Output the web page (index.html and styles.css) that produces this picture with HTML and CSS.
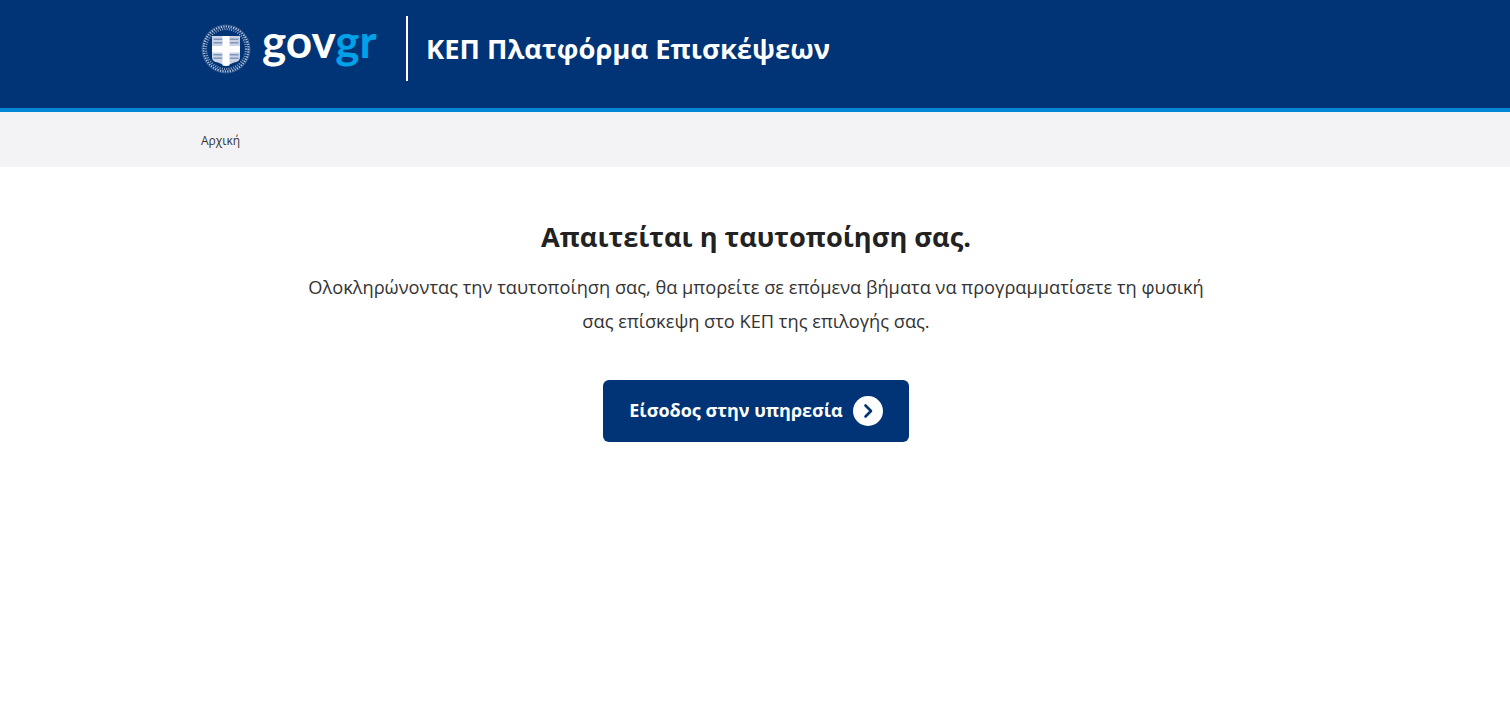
FILE: index.html
```html
<!DOCTYPE html>
<html lang="el">

<head>
    <meta charset="UTF-8">
    <meta name="viewport" content="width=device-width, initial-scale=1.0">
    <title>ΚΕΠ Πλατφόρμα Επισκέψεων</title>
    <link rel="stylesheet" href="styles.css">
</head>

<body>
    <header class="header">
        <div class="wrap header-row">
            <a class="logo" href="#">
                <svg class="emblem" viewBox="0 0 50 52" aria-hidden="true">
                    <!-- wreath -->
                    <circle cx="25" cy="26" r="22.500" fill="none" stroke="#aebcd4" stroke-width="2.200" stroke-dasharray="1.400 1.100"/>
                    <circle cx="25" cy="26" r="20" fill="none" stroke="#8ea3c6" stroke-width="2.200" stroke-dasharray="1 1.300"/>
                    <circle cx="25" cy="26" r="24" fill="none" stroke="#5f7ba6" stroke-width="0.600"/>
                    <!-- shield -->
                    <path d="M11 13h28v21c0 4-2.500 5-6 5.500l-8 3.500-8-3.500c-3.500-.5-6-1.500-6-5.500z" fill="#c9d3e3"/>
                    <path d="M12.500 15.500h9v1.600h-9zM12.500 19h9v1.600h-9zM28.500 15.500h9v1.600h-9zM28.500 19h9v1.600h-9zM12.500 31h9v1.600h-9zM12.500 34.500h9v1.600h-9zM28.500 31h9v1.600h-9zM28.500 34.500h9v1.600h-9z" fill="#7f97bd"/>
                    <path d="M21.500 13h7v10h10.500v6.500H28.500V42.500L25 43l-3.500-.5V29.500H11V23h10.500z" fill="#fff"/>
                </svg>
                <span class="wordmark">gov<span class="wordmark-gr">gr</span></span>
            </a>
            <h1 class="site-title">ΚΕΠ Πλατφόρμα Επισκέψεων</h1>
        </div>
    </header>

    <nav class="breadcrumb">
        <div class="wrap">
            <a href="#">Αρχική</a>
        </div>
    </nav>

    <main class="wrap content">
        <h2>Απαιτείται η ταυτοποίηση σας.</h2>
        <p class="lead">Ολοκληρώνοντας την ταυτοποίηση σας, θα μπορείτε σε επόμενα βήματα να προγραμματίσετε τη φυσική σας επίσκεψη στο ΚΕΠ της επιλογής σας.</p>
        <a class="login-button" href="#">
            Είσοδος στην υπηρεσία
            <span class="login-arrow">
                <svg viewBox="0 0 30 30" aria-hidden="true">
                    <path d="M12.500 9.500l5.500 5.500-5.500 5.500" fill="none" stroke="#003476" stroke-width="2.600" stroke-linecap="round" stroke-linejoin="round"/>
                </svg>
            </span>
        </a>
    </main>
</body>

</html>
```

FILE: styles.css
```css
body {
    margin: 0;
    color: #222;
    background: #fff;
    font-family: 'Open Sans', 'Noto Sans', sans-serif;
}

a {
    color: inherit;
    text-decoration: none;
}

.wrap {
    box-sizing: border-box;
    width: 1140px;
    margin: 0 auto;
    padding: 0 16px;
}

/* Header */
.header {
    background-color: #003476;
    border-bottom: 4px solid #0088d6;
    height: 108px;
}

.header-row {
    display: flex;
    align-items: flex-start;
    padding-top: 16px;
}

.logo {
    display: flex;
    align-items: flex-start;
    width: 205px;
    height: 65px;
    border-right: 2px solid #fff;
    margin-right: 18px;
}

.emblem {
    width: 50px;
    height: 52px;
    margin-top: 7px;
}

.wordmark {
    margin-left: 11px;
    margin-top: -2px;
    color: #fff;
    font-family: 'Lato', sans-serif;
    font-size: 46px;
    font-weight: 700;
    line-height: 54px;
}

.wordmark-gr {
    color: #00a1e6;
}

.site-title {
    margin: 0;
    color: #fff;
    font-size: 27.400px;
    font-weight: 700;
    line-height: 66px;
}

/* Breadcrumb */
.breadcrumb {
    background-color: #f3f3f6;
    height: 55px;
    font-size: 12px;
    line-height: 58px;
    color: #333;
}

/* Main */
.content {
    display: flex;
    flex-direction: column;
    align-items: center;
    padding-left: 18px;
    text-align: center;
}

h2 {
    margin: 51px 0 0;
    color: #222;
    font-size: 27.200px;
    font-weight: 700;
    line-height: 38px;
}

.lead {
    width: 910px;
    margin: 14px 0 0;
    color: #333;
    font-size: 18.240px;
    line-height: 34px;
}

.login-button {
    display: flex;
    align-items: center;
    justify-content: center;
    gap: 10px;
    box-sizing: border-box;
    width: 306px;
    height: 62px;
    margin-top: 42px;
    padding-bottom: 2px;
    background-color: #003476;
    border-radius: 6px;
    color: #fff;
    font-size: 18px;
    font-weight: 700;
}

.login-arrow {
    display: block;
    width: 30px;
    height: 30px;
    margin-top: 2px;
    border-radius: 50%;
    background-color: #fff;
}

.login-arrow svg {
    display: block;
}
```
